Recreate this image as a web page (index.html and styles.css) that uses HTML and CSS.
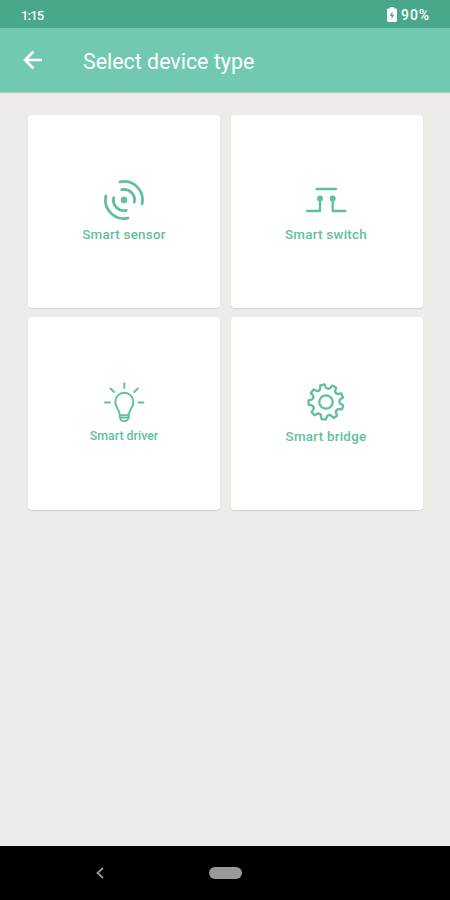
FILE: index.html
```html
<!DOCTYPE html>
<html lang="en">
<head>
    <meta charset="UTF-8">
    <title>Select device type</title>
    <link rel="stylesheet" href="styles.css">
</head>
<body>
    <div class="status-bar">
        <span class="time">1:15</span>
        <div class="battery">
            <svg width="10" height="15" viewBox="0 0 10 15">
                <path d="M3 0h4v1.600h1.600q1.400 0 1.400 1.400v10.600q0 1.400-1.400 1.400H1.400Q0 15 0 13.600V3q0-1.400 1.400-1.400H3z" fill="#fff"/>
                <path d="M5.400 4.500L2.800 9h1.800v3.200L7.200 7.800H5.400z" fill="#49a78b"/>
            </svg>
            <span>90%</span>
        </div>
    </div>

    <header class="toolbar">
        <svg class="back" width="20" height="20" viewBox="0 0 20 20">
            <path d="M19 10H2M10.500 1.500L2 10l8.500 8.500"/>
        </svg>
        <h1>Select device type</h1>
    </header>

    <main class="devices">
        <div class="card">
            <svg class="icon" width="44" height="44" viewBox="0 0 44 44">
                <circle class="dot" cx="22" cy="22" r="3.200"/>
                <path d="M18 3.900A18.500 18.500 0 0 1 40.100 26"/>
                <path d="M3.900 18A18.500 18.500 0 0 0 26 40.100"/>
                <path d="M19.700 11.700A10.500 10.500 0 0 1 32.300 24.300"/>
                <path d="M11.700 19.700A10.500 10.500 0 0 0 24.300 32.300"/>
            </svg>
            <span class="label">Smart sensor</span>
        </div>
        <div class="card right">
            <svg class="icon line" width="44" height="44" viewBox="0 0 44 44">
                <path d="M12.500 11H32M3 33H16V21M41.500 33H28.700V21"/>
                <circle class="dot" cx="16" cy="20.500" r="3"/>
                <circle class="dot" cx="28.700" cy="20.500" r="3"/>
            </svg>
            <span class="label">Smart switch</span>
        </div>
        <div class="card">
            <svg class="icon thin" width="44" height="44" viewBox="0 0 44 44">
                <path d="M17.800 35.300C17.800 29.500 13.300 28.500 13.300 21.800a9 9 0 0 1 18 0C31.300 28.500 26.800 29.500 26.800 35.300zM17.800 35.300v1.500a4.500 4.300 0 0 0 9 0v-1.500M18 37.600h8.600"/>
                <path d="M22.300 8V3.200M12 12L8.500 8.500M32.300 12L35.800 8.500M8 22.500H3M36.500 22.500H41.500"/>
            </svg>
            <span class="label driver">Smart driver</span>
        </div>
        <div class="card right">
            <svg class="icon line" width="44" height="44" viewBox="0 0 44 44">
                <circle cx="22" cy="22" r="6.700"/>
                <path id="gear"/>
            </svg>
            <span class="label">Smart bridge</span>
        </div>
    </main>

    <nav class="nav-bar">
        <svg class="nav-back" width="8" height="12" viewBox="0 0 8 12">
            <path d="M7 1L1.500 6L7 11"/>
        </svg>
        <span class="home"></span>
    </nav>

    <script>
        // outline of the gear: two outer points per tooth, then a curve through the valley
        const teeth = 9;
        const step = 360 / teeth;

        function point(angle, radius) {
            const a = angle * Math.PI / 180;
            return (22 + radius * Math.cos(a)).toFixed(2) + ' ' + (22 + radius * Math.sin(a)).toFixed(2);
        }

        let outline = '';
        for (let i = 0; i < teeth; i++) {
            const angle = -102 + i * step;
            outline += (i ? 'L' : 'M') + point(angle - 7, 17.600);
            outline += 'L' + point(angle + 7, 17.600);
            outline += 'L' + point(angle + 12, 14.300);
            outline += 'Q' + point(angle + step / 2, 12.600) + ' ' + point(angle + step - 12, 14.300);
        }
        document.getElementById('gear').setAttribute('d', outline + 'Z');
    </script>
</body>
</html>
```
FILE: styles.css
```css
* {
    box-sizing: border-box;
}
body {
    margin: 0;
    height: 900px;
    display: flex;
    flex-direction: column;
    background-color: #edece8;
    font-family: Roboto, sans-serif;
    overflow: hidden;
}
.status-bar {
    height: 28px;
    padding: 2px 20px 0 21px;
    display: flex;
    align-items: center;
    justify-content: space-between;
    background-color: #49a78b;
    color: #fff;
    font-size: 13px;
    font-weight: 500;
}
.time {
    letter-spacing: -0.8px;
}
.battery {
    display: flex;
    align-items: center;
    gap: 4px;
    font-size: 14px;
    letter-spacing: 0.9px;
}
.battery svg {
    margin-top: -2px;
}
.toolbar {
    height: 64px;
    padding-left: 23px;
    display: flex;
    align-items: center;
    background-color: #70c9b0;
    box-shadow: 0 1px 1px rgba(0, 60, 40, 0.2);
}
.back {
    fill: none;
    stroke: #fff;
    stroke-width: 2.5;
}
h1 {
    margin: 2px 0 0 40px;
    color: #fff;
    font-size: 21.4px;
    font-weight: 400;
}
.devices {
    flex: 1;
    padding: 23px 27px 0 28px;
    display: grid;
    grid-template-columns: 192px 192px;
    grid-auto-rows: 193px;
    gap: 9px 11px;
    align-content: start;
}
.card {
    padding-top: 63px;
    display: flex;
    flex-direction: column;
    align-items: center;
    background-color: #fff;
    border-radius: 4px;
    box-shadow: 0 1px 1px rgba(0, 0, 0, 0.12);
}
.right {
    padding-right: 2px;
}
.icon {
    fill: none;
    stroke: #5fbf9f;
    stroke-width: 2.8;
    stroke-linecap: round;
    stroke-linejoin: round;
}
.line {
    stroke-width: 2.3;
}
.thin {
    stroke-width: 1.9;
}
.dot {
    fill: #5fbf9f;
    stroke: none;
}
.label {
    margin-top: 5px;
    color: #5fbf9f;
    font-size: 13.4px;
    line-height: 16px;
    font-weight: 500;
    letter-spacing: 0.25px;
    white-space: nowrap;
}
.driver {
    margin-top: 4px;
    font-size: 12.4px;
    letter-spacing: 0;
}
.nav-bar {
    height: 54px;
    padding-left: 96px;
    display: flex;
    align-items: center;
    background-color: #000;
}
.nav-back {
    fill: none;
    stroke: #999;
    stroke-width: 1.8;
}
.home {
    width: 33px;
    height: 12px;
    margin-left: 105px;
    border-radius: 6px;
    background-color: #999;
}
```
